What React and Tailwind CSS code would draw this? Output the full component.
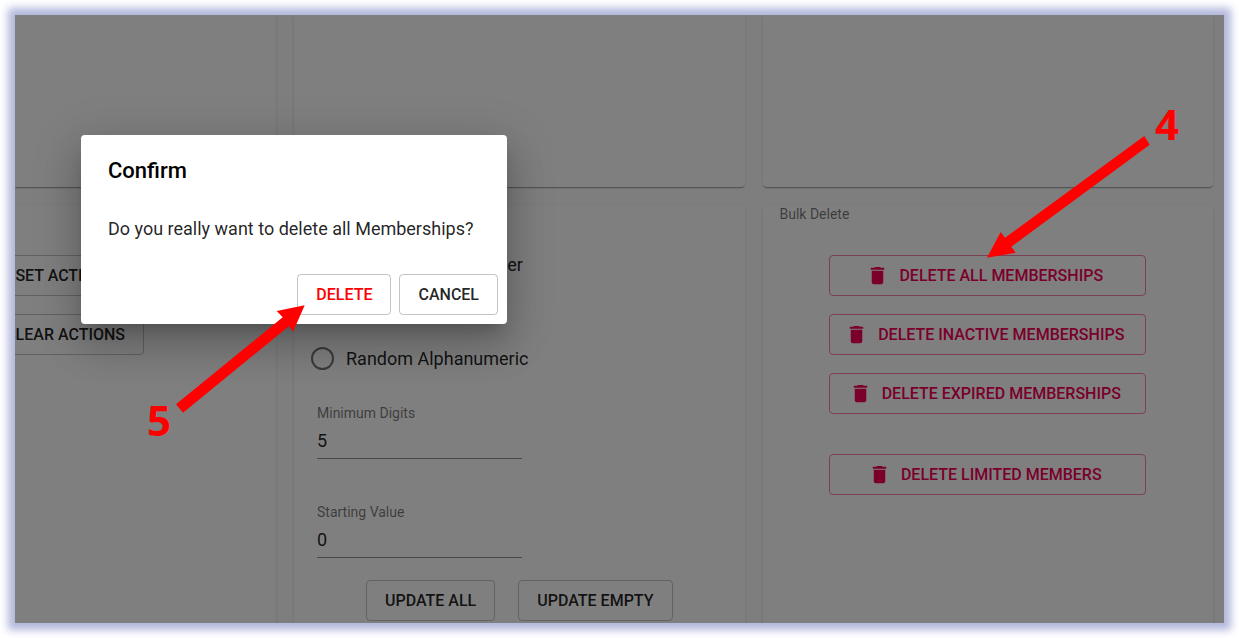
import { useState } from "react";
import clsx from "clsx";

const numberingModes = ["Random Digit Number", "Random Alphabetic", "Random Alphanumeric"];

const TrashIcon = () => (
  <svg viewBox="0 0 24 24" className="h-[23px] w-[23px] shrink-0 fill-current" aria-hidden="true">
    <path d="M6 19c0 1.1.9 2 2 2h8c1.1 0 2-.9 2-2V7H6v12zM19 4h-3.5l-1-1h-5l-1 1H5v2h14V4z" />
  </svg>
);

const OutlinedButton = ({ className, children, ...props }) => (
  <button
    type="button"
    className={clsx(
      "flex h-[41px] items-center justify-center rounded-[4px] border px-[18px] text-base font-medium whitespace-nowrap uppercase",
      className || "border-black/23 text-black/87"
    )}
    {...props}
  >
    {children}
  </button>
);

const BulkDeleteButton = ({ children }) => (
  <button
    type="button"
    className="flex h-[41px] w-full items-center justify-center gap-[10px] rounded-[4px] border border-[#f50057]/50 pr-[18px] pl-3 text-base font-medium whitespace-nowrap text-[#f50057] uppercase"
  >
    <TrashIcon />
    {children}
  </button>
);

const Card = ({ className, children }) => (
  <section
    className={clsx(
      "min-w-0 bg-white shadow-[0_2px_1px_-1px_rgba(0,0,0,0.2),0_1px_1px_0_rgba(0,0,0,0.14),0_1px_3px_0_rgba(0,0,0,0.12)]",
      className
    )}
  >
    {children}
  </section>
);

const NumberField = ({ id, label, value, onChange }) => (
  <div className="ml-1.5 flex w-[205px] flex-col">
    <label htmlFor={id} className="text-sm leading-5 text-black/54">
      {label}
    </label>
    <input
      id={id}
      type="text"
      inputMode="numeric"
      value={value}
      onChange={(e) => onChange(e.target.value)}
      className="h-9 w-full border-b border-black/42 bg-transparent text-lg text-black/87 outline-none"
    />
  </div>
);

const ConfirmDialog = () => (
  <div
    role="dialog"
    aria-labelledby="confirm-title"
    className="absolute top-[120px] left-[66px] w-[426px] rounded-[4px] bg-white pt-[18px] pb-[9px] shadow-[0_11px_15px_-7px_rgba(0,0,0,0.2),0_24px_38px_3px_rgba(0,0,0,0.14),0_9px_46px_8px_rgba(0,0,0,0.12)]"
  >
    <h2 id="confirm-title" className="px-[27px] text-[22px] leading-9 font-medium text-black">
      Confirm
    </h2>
    <p className="mt-[26px] px-[27px] text-lg leading-7 whitespace-nowrap text-black/87">
      Do you really want to delete all Memberships?
    </p>
    <div className="mt-[31px] flex justify-end gap-2 px-[9px]">
      <OutlinedButton className="border-black/23 text-[#f00]">Delete</OutlinedButton>
      <OutlinedButton>Cancel</OutlinedButton>
    </div>
  </div>
);

export default function App() {
  const [mode, setMode] = useState("Random Digit Number");
  const [minDigits, setMinDigits] = useState("5");
  const [startValue, setStartValue] = useState("0");

  return (
    <div className="relative flex min-h-screen bg-white p-[15px] font-['Roboto',sans-serif]">
      <div className="relative flex-1 overflow-hidden bg-[#fdfdfd] shadow-[0_0_8px_7px_#b2b8dc]">
        <main className="grid h-full grid-cols-[261px_minmax(0,1fr)_minmax(0,1fr)] grid-rows-[172px_1fr] gap-[18px] pr-[11px]">
          <Card className="rounded-br-[4px]" />
          <Card className="rounded-b-[4px]" />
          <Card className="rounded-b-[4px]" />

          <Card className="flex flex-col items-end rounded-tr-[4px] pt-[50px] pr-[132px]">
            <div className="flex flex-col gap-[18px]">
              <OutlinedButton>Set Actions</OutlinedButton>
              <OutlinedButton>Clear Actions</OutlinedButton>
            </div>
          </Card>

          <Card className="rounded-t-[4px] px-[17px] pt-9 pb-[2px]">
            <div>
              {numberingModes.map((name) => (
                <label key={name} className="flex h-[47px] items-center gap-3 text-lg text-black/87">
                  <input
                    type="radio"
                    name="numbering"
                    checked={mode === name}
                    onChange={() => setMode(name)}
                    className="h-[23px] w-[23px] appearance-none rounded-full border-2 border-black/54 checked:border-[6px]"
                  />
                  {name}
                </label>
              ))}
            </div>
            <div className="mt-[21px] flex flex-col gap-[43px]">
              <NumberField id="min-digits" label="Minimum Digits" value={minDigits} onChange={setMinDigits} />
              <NumberField id="start-value" label="Starting Value" value={startValue} onChange={setStartValue} />
            </div>
            <div className="mt-[22px] flex justify-center gap-[23px]">
              <OutlinedButton>Update All</OutlinedButton>
              <OutlinedButton>Update Empty</OutlinedButton>
            </div>
          </Card>

          <Card className="rounded-t-[4px] px-[17px]">
            <h3 className="text-sm leading-[18px] text-black/54">Bulk Delete</h3>
            <div className="mx-auto mt-8 flex w-[317px] max-w-full flex-col gap-[18px]">
              <BulkDeleteButton>Delete All Memberships</BulkDeleteButton>
              <BulkDeleteButton>Delete Inactive Memberships</BulkDeleteButton>
              <BulkDeleteButton>Delete Expired Memberships</BulkDeleteButton>
              <div className="pt-[22px]">
                <BulkDeleteButton>Delete Limited Members</BulkDeleteButton>
              </div>
            </div>
          </Card>
        </main>

        <div className="absolute inset-0 bg-black/50" />
        <ConfirmDialog />
      </div>

      {/* numbered step arrows */}
      <svg
        viewBox="980 90 210 175"
        className="pointer-events-none absolute top-[90px] right-[49px] h-[175px] w-[210px] overflow-visible fill-[#f00]"
      >
        <polygon points="1144.3,136 1149.7,144.7 1011.3,246.7 1015.7,252.7 987,257.7 1000.7,232 1005,237.7" />
        <text x="1155" y="140" className="font-['Open_Sans',sans-serif] text-[42px] font-bold">
          4
        </text>
      </svg>
      <svg
        viewBox="140 300 170 155"
        className="pointer-events-none absolute top-[300px] left-[140px] h-[155px] w-[170px] overflow-visible fill-[#f00]"
      >
        <polygon points="176,404.3 183,412.7 289,326 293,331.7 304.7,305.3 276.7,311 282.7,317.3" />
        <text x="147" y="436" className="font-['Open_Sans',sans-serif] text-[42px] font-bold">
          5
        </text>
      </svg>
    </div>
  );
}
